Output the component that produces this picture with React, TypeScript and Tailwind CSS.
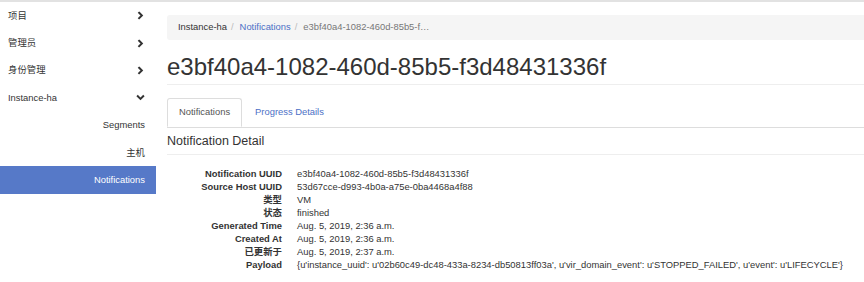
import React from "react";

const Chevron = ({ down = false }: { down?: boolean }) => (
  <svg width="9" height="9" viewBox="0 0 10 10" className="shrink-0">
    {down ? (
      <polyline points="2,3.5 5,6.5 8,3.5" fill="none" stroke="#333" strokeWidth="2.2" strokeLinecap="square" />
    ) : (
      <polyline points="3.5,2 6.5,5 3.5,8" fill="none" stroke="#333" strokeWidth="2.2" strokeLinecap="square" />
    )}
  </svg>
);

const rows: [string, string][] = [
  ["Notification UUID", "e3bf40a4-1082-460d-85b5-f3d48431336f"],
  ["Source Host UUID", "53d67cce-d993-4b0a-a75e-0ba4468a4f88"],
  ["类型", "VM"],
  ["状态", "finished"],
  ["Generated Time", "Aug. 5, 2019, 2:36 a.m."],
  ["Created At", "Aug. 5, 2019, 2:36 a.m."],
  ["已更新于", "Aug. 5, 2019, 2:37 a.m."],
  [
    "Payload",
    "{u'instance_uuid': u'02b60c49-dc48-433a-8234-db50813ff03a', u'vir_domain_event': u'STOPPED_FAILED', u'event': u'LIFECYCLE'}",
  ],
];

export default function App() {
  return (
    <div className="w-[864px] h-[282px] overflow-hidden bg-white border-t-2 border-[#e2e2e2] flex font-['Liberation_Sans','Noto_Sans_CJK_SC',sans-serif] text-[9.4px] text-[#333]">
      {/* Sidebar */}
      <div className="w-[156px] shrink-0 flex flex-col">
        {["项目", "管理员", "身份管理"].map((t) => (
          <div key={t} className="h-[27.4px] flex items-center justify-between pl-[8px] pr-[11px]">
            <span>{t}</span>
            <Chevron />
          </div>
        ))}
        <div className="h-[27.4px] flex items-center justify-between pl-[8px] pr-[11px]">
          <span>Instance-ha</span>
          <Chevron down />
        </div>
        <div className="h-[27.4px] flex items-center justify-end pr-[11px]">Segments</div>
        <div className="h-[27.4px] flex items-center justify-end pr-[11px]">主机</div>
        <div className="h-[27.4px] flex items-center justify-end pr-[11px] bg-[#5679c8] text-white">Notifications</div>
      </div>

      {/* Main */}
      <div className="flex-1 min-w-0 pl-[11px]">
        <div className="mt-[13px] h-[25px] bg-[#f5f5f5] rounded-l-[3px] pl-[11px] flex items-center whitespace-nowrap">
          <span>Instance-ha</span>
          <span className="text-[#bbb] px-[4px]">/</span>
          <span className="text-[#4c70c6] pl-[2px]">Notifications</span>
          <span className="text-[#bbb] px-[4px]">/</span>
          <span className="text-[#777] pl-[2px]">e3bf40a4-1082-460d-85b5-f…</span>
        </div>

        <div className="mt-[14px] text-[24px] leading-[26px] pb-[4px] border-b border-[#eeeeee] whitespace-nowrap">
          e3bf40a4-1082-460d-85b5-f3d48431336f
        </div>

        <div className="mt-[13px] flex border-b border-[#dddddd]">
          <div className="h-[29px] -mb-px px-[11px] mr-[2px] flex items-center border border-[#dddddd] border-b-white bg-white rounded-t-[3px] text-[#555]">
            Notifications
          </div>
          <div className="h-[29px] px-[11px] flex items-center text-[#4c70c6]">Progress Details</div>
        </div>

        <div className="mt-[6px] text-[12.5px] leading-[15px] pb-[5px] border-b border-[#eeeeee]">
          Notification Detail
        </div>

        <div className="mt-[13px] flex flex-col">
          {rows.map(([k, v]) => (
            <div key={k} className="flex h-[13px] items-center whitespace-nowrap">
              <div className="w-[115px] shrink-0 text-right font-bold">{k}</div>
              <div className="pl-[15px]">{v}</div>
            </div>
          ))}
        </div>
      </div>
    </div>
  );
}
